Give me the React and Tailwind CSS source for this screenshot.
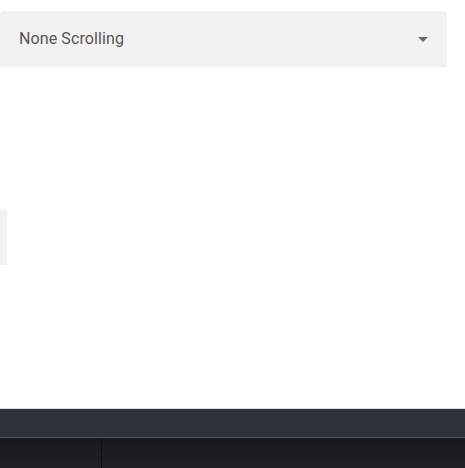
import React from "react";

const Caret = () => (
  <svg width="10" height="5" viewBox="0 0 10 5" className="fill-[#6b6b6b]">
    <path d="M0 0h10L5 5z" />
  </svg>
);

const FilledSelect = ({ label }) => (
  <div className="flex h-14 w-[447px] items-center justify-between rounded-t bg-[#f2f2f2] pl-[19px] pr-[19px]">
    <span className="text-base text-[#555] tracking-[0.1px]">{label}</span>
    <Caret />
  </div>
);

export default function App() {
  return (
    <div className="flex h-[468px] w-full flex-col overflow-hidden bg-white font-['Roboto',sans-serif]">
      <div className="pt-[11px]">
        <FilledSelect label="None Scrolling" />
      </div>

      <div className="mt-[142px] h-14 w-[7px] rounded-tr bg-[#f2f2f2]" />

      <div className="flex-1" />

      <footer className="flex flex-col">
        <div className="h-px bg-[#dcdcdc]" />
        <div className="h-[29px] border-b border-[#51555e] bg-[#2e323c]" />
        <div className="flex h-[30px] bg-gradient-to-b from-[#19191b] to-[#212224]">
          <div className="w-[102px] border-r border-[#0f0f10]" />
          <div className="flex-1" />
        </div>
      </footer>
    </div>
  );
}
